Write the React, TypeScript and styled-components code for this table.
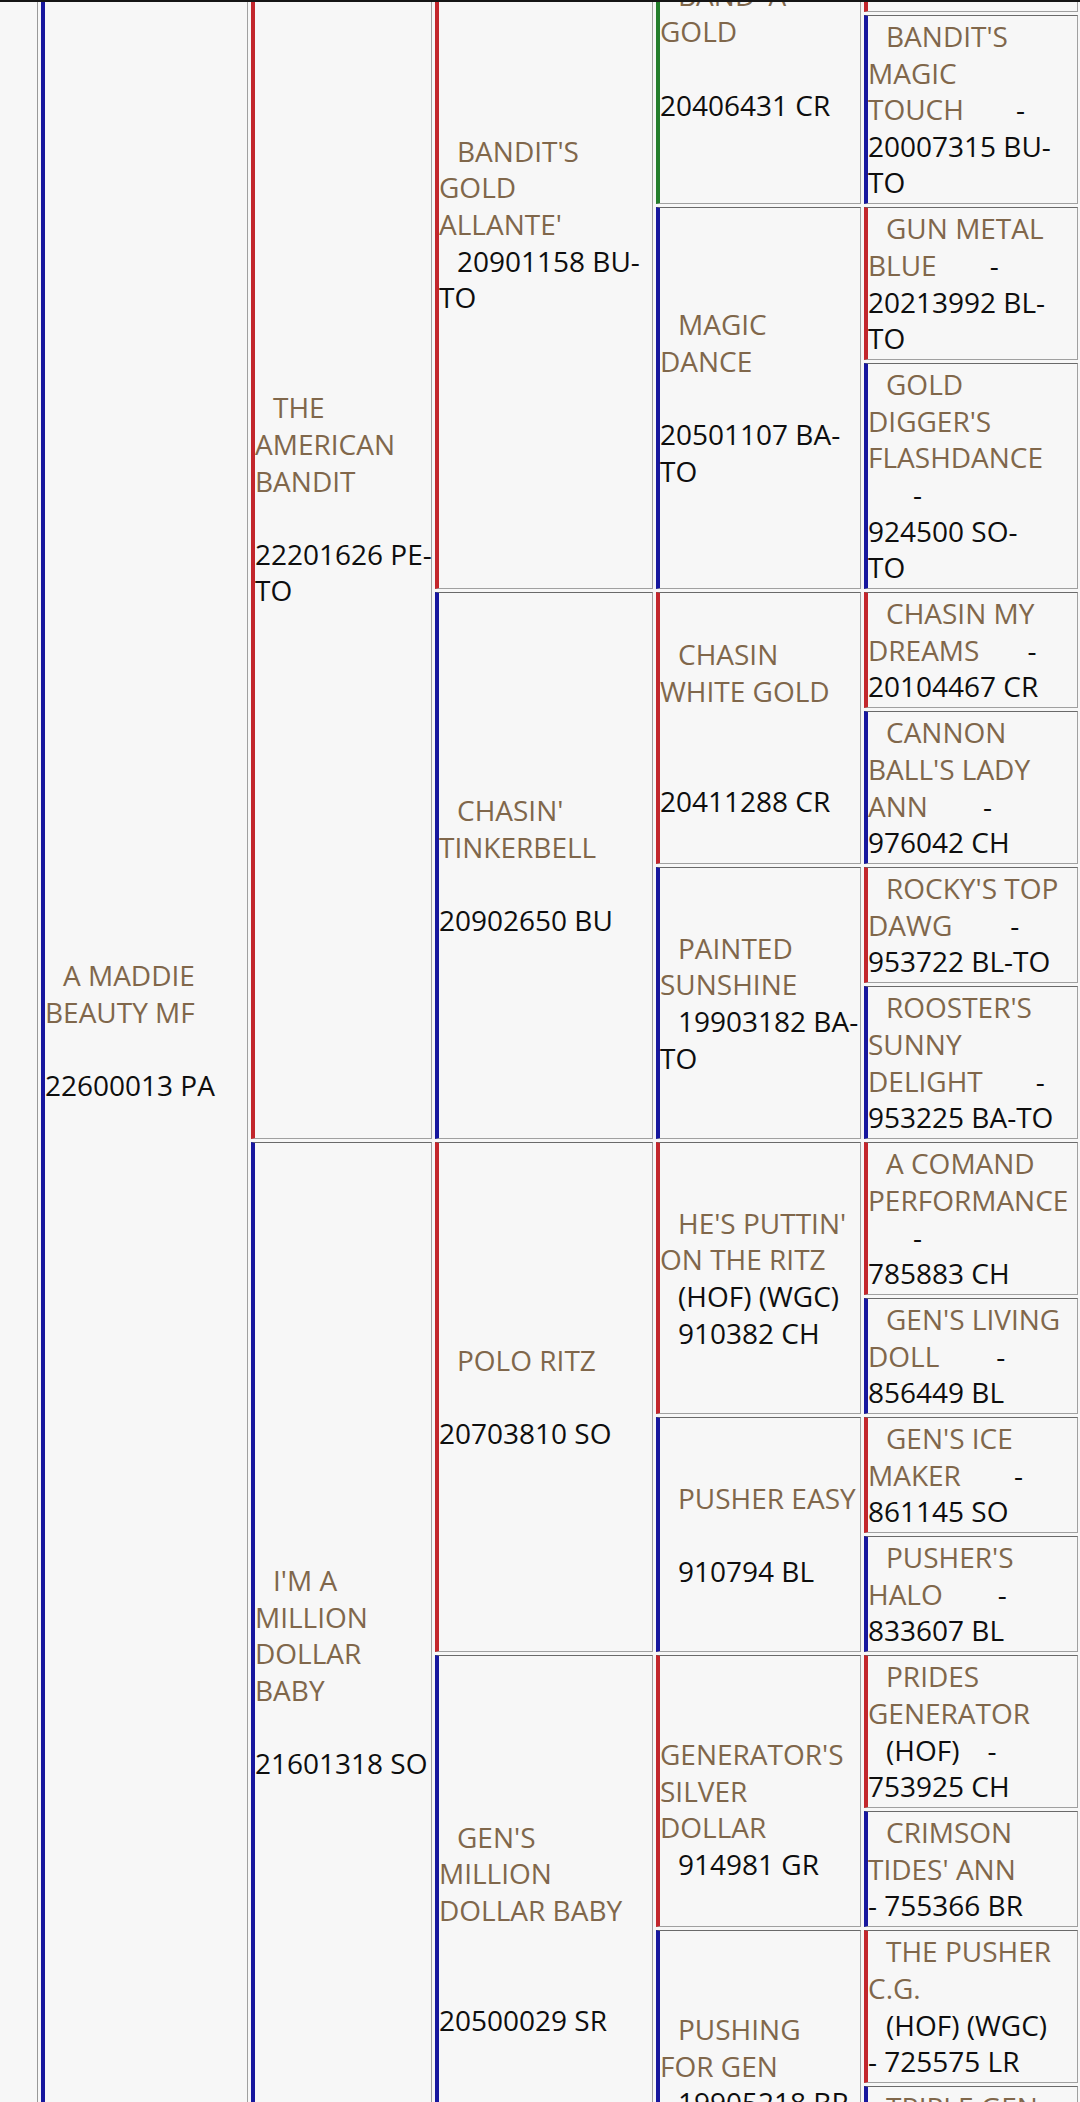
import React from 'react'
import styled, { createGlobalStyle } from 'styled-components'

type Bar = 'red' | 'blue' | 'green'

type Horse = {
  col: number
  row: number
  span: number
  bar: Bar
  lines: string[]
}

const barColors: Record<Bar, string> = {
  red: '#c2262c',
  blue: '#17179e',
  green: '#237d2b',
}

// leaf row heights (one per dam/sire of the last generation)
const rowHeights = [116, 189, 153, 226, 116, 153, 116, 153, 153, 116, 116, 116, 153, 116, 153, 116]

// line notation: '>' indents the line, '|' splits segments,
// '#' marks registration text, '~N' is a dash N px after the name
const horses: Horse[] = [
  { col: 1, row: 1, span: 16, bar: 'blue', lines: ['>A MADDIE', 'BEAUTY MF', '', '#22600013 PA', ''] },

  { col: 2, row: 1, span: 8, bar: 'red', lines: ['>THE', 'AMERICAN', 'BANDIT', '', '#22201626 PE-', '#TO', ''] },
  { col: 2, row: 9, span: 8, bar: 'blue', lines: [">I'M A", 'MILLION', 'DOLLAR', 'BABY', '', '#21601318 SO'] },

  { col: 3, row: 1, span: 4, bar: 'red', lines: [">BANDIT'S", 'GOLD', "ALLANTE'", '>#20901158 BU-', '#TO', ''] },
  { col: 3, row: 5, span: 4, bar: 'blue', lines: [">CHASIN'", 'TINKERBELL', '', '#20902650 BU'] },
  { col: 3, row: 9, span: 4, bar: 'red', lines: ['>POLO RITZ', '', '#20703810 SO'] },
  { col: 3, row: 13, span: 4, bar: 'blue', lines: [">GEN'S", 'MILLION', 'DOLLAR BABY', '', '', '#20500029 SR'] },

  { col: 4, row: 1, span: 2, bar: 'green', lines: [">BAND' A", 'GOLD', '', '#20406431 CR'] },
  { col: 4, row: 3, span: 2, bar: 'blue', lines: ['>MAGIC', 'DANCE', '', '#20501107 BA-', '#TO'] },
  { col: 4, row: 5, span: 2, bar: 'red', lines: ['>CHASIN', 'WHITE GOLD', '', '', '#20411288 CR'] },
  { col: 4, row: 7, span: 2, bar: 'blue', lines: ['>PAINTED', 'SUNSHINE', '>#19903182 BA-', '#TO'] },
  { col: 4, row: 9, span: 2, bar: 'red', lines: [">HE'S PUTTIN'", 'ON THE RITZ', '>#(HOF) (WGC)', '>#910382 CH'] },
  { col: 4, row: 11, span: 2, bar: 'blue', lines: ['>PUSHER EASY', '', '>#910794 BL'] },
  { col: 4, row: 13, span: 2, bar: 'red', lines: ['', "GENERATOR'S", 'SILVER', 'DOLLAR', '>#914981 GR'] },
  { col: 4, row: 15, span: 2, bar: 'blue', lines: ['>PUSHING', 'FOR GEN', '>#19905218 BR'] },
]

const lastGeneration: string[][] = [
  [],
  [">BANDIT'S", 'MAGIC', 'TOUCH|~52', '#20007315 BU-', '#TO'],
  ['>GUN METAL', 'BLUE|~53', '#20213992 BL-', '#TO'],
  ['>GOLD', "DIGGER'S", 'FLASHDANCE', '~45', '#924500 SO-', '#TO'],
  ['>CHASIN MY', 'DREAMS|~48', '#20104467 CR'],
  ['>CANNON', "BALL'S LADY", 'ANN|~55', '#976042 CH'],
  [">ROCKY'S TOP", 'DAWG|~58', '#953722 BL-TO'],
  [">ROOSTER'S", 'SUNNY', 'DELIGHT|~53', '#953225 BA-TO'],
  ['>A COMAND', 'PERFORMANCE', '~45', '#785883 CH'],
  [">GEN'S LIVING", 'DOLL|~57', '#856449 BL'],
  [">GEN'S ICE", 'MAKER|~53', '#861145 SO'],
  [">PUSHER'S", 'HALO|~55', '#833607 BL'],
  ['>PRIDES', 'GENERATOR', '>#(HOF)|~28', '#753925 CH'],
  ['>CRIMSON', "TIDES' ANN", '#- 755366 BR'],
  ['>THE PUSHER', 'C.G.', '>#(HOF) (WGC)', '#- 725575 LR'],
  ['>TRIPLE GEN', '', ''],
]

lastGeneration.forEach((lines, i) => {
  horses.push({ col: 5, row: i + 1, span: 1, bar: i % 2 === 0 ? 'red' : 'blue', lines })
})

const GlobalStyle = createGlobalStyle`
  html, body {
    margin: 0;
    padding: 0;
    background: #f7f7f7;
  }

  body {
    font-family: 'Open Sans', 'DejaVu Sans', sans-serif;
  }
`

const Screen = styled.main`
  width: 1080px;
  height: 2102px;
  overflow: hidden;
  box-sizing: border-box;
  border-top: 2px solid #151515;
  background: #f7f7f7;
`

const Pedigree = styled.section<{ $rows: string }>`
  display: grid;
  grid-template-columns: 207px 181px 218px 205px 214px;
  grid-template-rows: ${({ $rows }) => $rows};
  gap: 3px;
  width: max-content;
  margin: -106px 0 0 37px;
  padding-left: 3px;
  border-left: 1px solid #999;
`

const Cell = styled.div<{ $col: number; $row: number; $span: number; $bar: Bar }>`
  grid-column: ${({ $col }) => $col};
  grid-row: ${({ $row, $span }) => `${$row} / span ${$span}`};
  display: flex;
  flex-direction: column;
  justify-content: center;
  box-sizing: border-box;
  min-width: 0;
  padding: 2px 1px 2px 0;
  border: 1px solid #a0a0a0;
  border-top-color: #6a6a6a;
  border-left: 4px solid ${({ $bar }) => barColors[$bar]};
  background: #f7f7f7;
  font-size: 28px;
  line-height: 36.67px;
  color: #111;
`

const Line = styled.div<{ $indent: boolean }>`
  height: 36.67px;
  white-space: pre;
  padding-left: ${({ $indent }) => ($indent ? '18px' : '0')};
`

const Name = styled.span`
  color: #80674b;
`

const Reg = styled.span`
  color: #0e0e0e;
`

const Dash = styled.span<{ $gap: number }>`
  margin-left: ${({ $gap }) => $gap}px;
  color: #0e0e0e;
`

const renderLine = (spec: string, i: number) => {
  const indent = spec.startsWith('>')
  const body = indent ? spec.slice(1) : spec
  const parts = body ? body.split('|') : []

  return (
    <Line key={i} $indent={indent}>
      {parts.map((part, j) => {
        if (part.startsWith('~')) return <Dash key={j} $gap={Number(part.slice(1))}>-</Dash>
        if (part.startsWith('#')) return <Reg key={j}>{part.slice(1)}</Reg>
        return <Name key={j}>{part}</Name>
      })}
    </Line>
  )
}

export default function App() {
  return (
    <>
      <GlobalStyle />
      <Screen>
        <Pedigree $rows={rowHeights.map((h) => `${h}px`).join(' ')}>
          {horses.map((horse) => (
            <Cell
              key={`${horse.col}-${horse.row}`}
              $col={horse.col}
              $row={horse.row}
              $span={horse.span}
              $bar={horse.bar}
            >
              {horse.lines.map(renderLine)}
            </Cell>
          ))}
        </Pedigree>
      </Screen>
    </>
  )
}
